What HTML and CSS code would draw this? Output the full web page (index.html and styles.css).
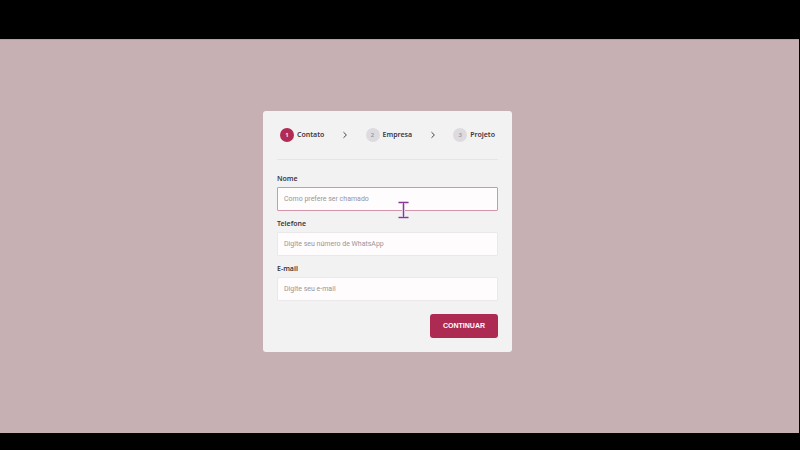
FILE: index.html
```html
<!DOCTYPE html>
<html lang="pt-BR">
<head>
<meta charset="utf-8">
<meta name="viewport" content="width=device-width, initial-scale=1">
<title>Contato</title>
<link rel="stylesheet" href="styles.css">
</head>
<body>
<main class="stage">
  <form class="card">
    <ol class="steps">
      <li class="step step-active"><span class="dot">1</span>Contato</li>
      <li class="arrow" aria-hidden="true"><svg viewBox="0 0 6 8"><path d="M1.5 1.2 4.4 4 1.5 6.8"/></svg></li>
      <li class="step"><span class="dot">2</span>Empresa</li>
      <li class="arrow" aria-hidden="true"><svg viewBox="0 0 6 8"><path d="M1.5 1.2 4.4 4 1.5 6.8"/></svg></li>
      <li class="step"><span class="dot">3</span>Projeto</li>
    </ol>
    <div class="field">
      <label for="nome">Nome</label>
      <div class="control">
        <input class="current" id="nome" type="text" placeholder="Como prefere ser chamado">
        <svg class="pointer" viewBox="0 0 13 18" aria-hidden="true"><path class="halo" d="M1.5 1.5h10M6.5 1.5v15M1.5 16.5h10"/><path d="M1.5 1.5h10M6.5 1.5v15M1.5 16.5h10"/></svg>
      </div>
    </div>
    <div class="field">
      <label for="telefone">Telefone</label>
      <input id="telefone" type="tel" placeholder="Digite seu número de WhatsApp">
    </div>
    <div class="field">
      <label for="email">E-mail</label>
      <input id="email" type="email" placeholder="Digite seu e-mail">
    </div>
    <button class="submit" type="button">CONTINUAR</button>
  </form>
</main>
</body>
</html>
```
FILE: styles.css
```css
* {
  box-sizing: border-box;
}

body {
  margin: 0;
  min-height: 100vh;
  padding: 39px 1px 17px 0;
  display: flex;
  background: #000;
  color: #3b383c;
  font-family: "Noto Sans", sans-serif;
  font-size: 7px;
  line-height: 10px;
}

.stage {
  flex: 1;
  display: flex;
  align-items: center;
  justify-content: center;
  padding: 0 24px 11px 0;
  border-top: 1px solid #b5a0a4;
  background: #c6b0b3;
}

.card {
  display: flex;
  flex-direction: column;
  gap: 8px;
  width: 100%;
  max-width: 249px;
  padding: 14px;
  border-radius: 3px;
  background: #f3f2f3;
}

.steps {
  display: flex;
  align-items: center;
  justify-content: space-between;
  margin: 0 0 6px;
  padding: 3px 3px 17px;
  border-bottom: 1px solid #e6e4e6;
  list-style: none;
}

.step {
  display: flex;
  align-items: center;
  gap: 3px;
  font-weight: 600;
}

.dot {
  display: grid;
  place-items: center;
  width: 14px;
  height: 14px;
  border-radius: 50%;
  background: #dddbe0;
  color: #96939a;
  font-size: 6px;
}

.step-active .dot {
  background: #b02c54;
  color: #fff;
}

.arrow {
  display: flex;
}

.arrow svg {
  width: 6px;
  height: 8px;
  fill: none;
  stroke: #454247;
}

.field {
  display: flex;
  flex-direction: column;
  gap: 3px;
}

label {
  font-weight: 600;
}

.control {
  position: relative;
  display: flex;
}

input {
  width: 100%;
  height: 24px;
  padding: 0 6px;
  border: 1px solid #ebe8eb;
  border-radius: 1px;
  outline: 0;
  background: #fefcfd;
  color: #3b383c;
  font-family: Roboto, sans-serif;
  font-size: 7px;
}

input::placeholder {
  color: #98959a;
  opacity: 1;
}

.current {
  border-color: #d595a9;
}

.pointer {
  position: absolute;
  top: 14px;
  left: 120px;
  width: 13px;
  height: 18px;
  fill: none;
  stroke: #873a94;
}

.pointer .halo {
  stroke: #dfc8e5;
  stroke-width: 3;
}

.submit {
  align-self: flex-end;
  width: 68px;
  height: 24px;
  margin-top: 5px;
  padding: 0;
  border: 0;
  border-radius: 3px;
  background: #ad2a52;
  color: #fff;
  font-family: "Liberation Sans", sans-serif;
  font-size: 7px;
  font-weight: 700;
}
```
